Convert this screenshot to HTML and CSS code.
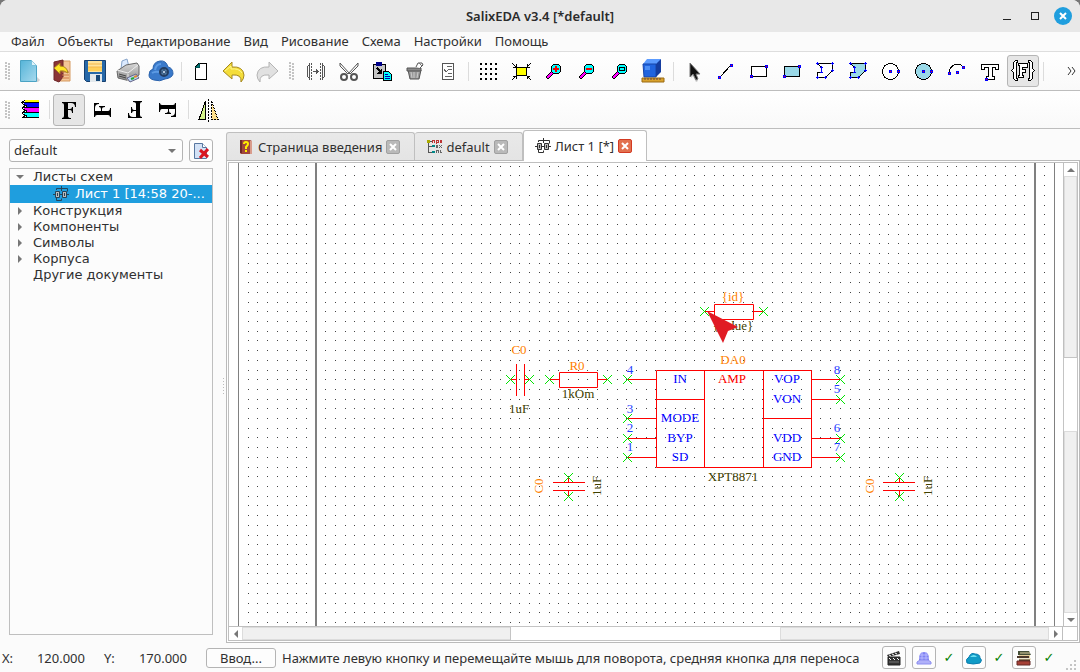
FILE: index.html
```html
<!DOCTYPE html>
<html lang="ru">
<head>
<meta charset="utf-8">
<title>SalixEDA v3.4 [*default]</title>
<link rel="stylesheet" href="styles.css">
</head>
<body>
<svg class="defs" aria-hidden="true">
  <defs>
    <linearGradient id="g-page" x1="0" y1="0" x2="1" y2="1"><stop offset="0" stop-color="#55b4d8"/><stop offset="1" stop-color="#a8daee"/></linearGradient>
    <linearGradient id="g-gray" x1="0" y1="0" x2="0" y2="1"><stop offset="0" stop-color="#d8d8d8"/><stop offset="1" stop-color="#8c8c8c"/></linearGradient>
    <symbol id="sheet" viewBox="0 0 16 16">
      <path d="M3.500 4V2.500h5M8.500 0v5M8 2.500h6.500v3M0 8.500h16M3.500 11v3.500h5v-2" fill="none" stroke="currentColor"/>
      <path d="M2.500 5.500h4v6h-4zM9.500 5.500h4v6h-4z" fill="#bbb" stroke="currentColor"/>
      <path d="M4 7h1v3H4zM11 7h1v3h-1zM6 8h4v1H6z" fill="currentColor"/>
    </symbol>
    <symbol id="lens" viewBox="0 0 24 24">
      <path d="M11 13L6 18" stroke="#000" stroke-width="4" stroke-linecap="square"/>
      <path d="M11 13L6 18" stroke="#f0f" stroke-width="2" stroke-linecap="square"/>
      <circle cx="14" cy="10" r="5" fill="#0ff" stroke="#000"/>
    </symbol>
    <symbol id="letter-f" viewBox="0 0 24 24">
      <path d="M5 4h14v5h-1q0-4-4-4h-3v6h2q2 0 2-2h1v6h-1q0-3-2-3h-2v6q0 2 3 2v1H5v-1q2 0 2-2V7q0-2-2-2z"/>
    </symbol>
  </defs>
</svg>
<div class="window">
  <header class="titlebar">
    <h1 class="title">SalixEDA v3.4 [*default]</h1>
    <div class="window-controls">
      <button class="wc" aria-label="Свернуть"><svg width="10" height="10" shape-rendering="crispEdges"><path d="M1 8.500h8" stroke="#222"/></svg></button>
      <button class="wc" aria-label="Развернуть"><svg width="10" height="10" shape-rendering="crispEdges"><path d="M1.500 1.500h7v7h-7z" fill="none" stroke="#222"/></svg></button>
      <button class="wc wc-close" aria-label="Закрыть"><svg width="10" height="10"><path d="M2 2l6 6M8 2l-6 6" stroke="#fff" stroke-width="2"/></svg></button>
    </div>
  </header>

  <nav class="menubar" aria-label="Меню">
    <button>Файл</button><button>Объекты</button><button>Редактирование</button><button>Вид</button><button>Рисование</button><button>Схема</button><button>Настройки</button><button>Помощь</button>
  </nav>

  <div class="toolbar" role="toolbar" aria-label="Основная">
    <span class="handle"></span>
    <button class="tool" aria-label="Создать"><svg viewBox="0 0 24 24"><path d="M20 18l3 3-2 2H8z" fill="#888" opacity=".35"/><path d="M3.500 1.500h11l5 5v16h-16z" fill="url(#g-page)" stroke="#4ba3c4"/><path d="M14.500 1.500v5h5" fill="#dff3fa" stroke="#79c1dc"/></svg></button>
    <button class="tool" aria-label="Открыть"><svg viewBox="0 0 24 24"><path d="M9 2h11v20H9z" fill="#f3c596" stroke="#d69a60"/><path d="M4 3l9-2v17l-4 5-5-2z" fill="#8b3536" stroke="#6d2728"/><path d="M12 13h7M12 16h7M12 19h7" stroke="#cf7a49"/><path d="M4 9l6-5v3q7 0 8 7-4-3-8-2v3z" fill="#ffe526" stroke="#ab8320"/></svg></button>
    <button class="tool" aria-label="Сохранить"><svg viewBox="0 0 24 24"><path d="M1.500 1.500h21v21h-19l-2-2z" fill="#2768a8" stroke="#17406f"/><path d="M5 2h14v11H5z" fill="#ffe49b"/><path d="M5 8h14v4H5z" fill="#ffd05a"/><path d="M5 5h14M5 8h14" stroke="#f3b64a"/><path d="M7 15h12v8H7z" fill="#e2e8ec"/><path d="M13 16h4v6h-4z" fill="#174878"/></svg></button>
    <button class="tool" aria-label="Печать"><svg viewBox="0 0 24 24"><path d="M5 10L6 2l5-2 2 8z" fill="#dbeaff" stroke="#87a4c9"/><path d="M1 12l9-6 11-2 2 3v9l-9 6-12-3z" fill="url(#g-gray)" stroke="#666"/><path d="M1 11l11 3 10-8M12 15v7" fill="none" stroke="#eee"/><path d="M3 15l7 2M3 17l7 2" stroke="#444"/><path d="M11 19l9-4 3 4-9 4z" fill="#bcd4f4" stroke="#668"/><path d="M15 20l3-1" stroke="#2a3" stroke-width="2"/><path d="M18 18l3-1" stroke="#d83" stroke-width="2"/></svg></button>
    <button class="tool" aria-label="Облако"><svg viewBox="0 0 24 24"><path d="M5 21q-5-1-5-5 0-5 4-6Q4 3 11 2q6-1 8 6 5 1 5 7-1 4-8 5-5 3-11 1z" fill="#3979ca" stroke="#2a62ac"/><path d="M6 11q1-6 6-6M3 14q3-2 7-1" fill="none" stroke="#5d9be4" stroke-width="2"/><circle cx="15" cy="13" r="4" fill="#547da5" stroke="#233e63" stroke-width="2"/><path d="M15 10v6M12 13h6" stroke="#233e63"/><circle cx="15" cy="13" r="1" fill="#def"/></svg></button>
    <span class="separator"></span>
    <button class="tool crisp" aria-label="Новый лист"><svg viewBox="0 0 24 24"><path d="M9.500 4.500h8v16h-11v-13z" fill="#fff" stroke="#000"/><path d="M7 8l3-3v3z" fill="#007c7c" stroke="#055"/></svg></button>
    <button class="tool" aria-label="Отменить"><svg viewBox="0 0 24 24"><path d="M1 12l9-9v5q11-1 12 8 0 4-3 7 1-8-9-7v4z" fill="#f4dd39" stroke="#a58820"/><path d="M3 12l6-5v3q8-1 11 4" fill="none" stroke="#fff78e"/></svg></button>
    <button class="tool" aria-label="Повторить"><svg viewBox="0 0 24 24"><path d="M23 12l-9-9v5Q3 7 2 16q0 4 3 7-1-8 9-7v4z" fill="#e1e1e1" stroke="#b4b4b4"/></svg></button>
    <span class="handle handle-mid"></span>
    <button class="tool crisp" aria-label="Выровнять"><svg viewBox="0 0 24 24"><g fill="none" stroke="#555"><path d="M6 4.500L3.500 8v9L6 20.500M18 4.500L20.500 8v9L18 20.500M5.500 6v13M18.500 6v13"/><path d="M7.500 4v17M16.500 4v17" stroke-dasharray="2 1"/></g><path d="M9 12.500h4" stroke="#555"/><path d="M12 9l3 3.500-3 3.500z" fill="#555"/></svg></button>
    <button class="tool" aria-label="Вырезать"><svg viewBox="0 0 24 24"><path d="M3 4l10 11M21 4L11 15M3 4v3l8 8M21 4v3l-8 8" fill="none" stroke="#555"/><circle cx="7" cy="18" r="3" fill="#fff" stroke="#555" stroke-width="2"/><circle cx="17" cy="18" r="3" fill="#fff" stroke="#555" stroke-width="2"/></svg></button>
    <button class="tool crisp" aria-label="Вставить"><svg viewBox="0 0 24 24"><path d="M3.500 5.500h12v14h-12z" fill="#c5c5c5" stroke="#000"/><path d="M6 3h6v4H6z" fill="#00008b"/><path d="M7 9l5 5" stroke="#000" stroke-width="2"/><path d="M12 9v6H6z"/><path d="M13.500 12.500h5l3 3v6h-8z" fill="#0ff" stroke="#000"/><path d="M15 15.500h3M15 17.500h5M15 19.500h5" stroke="#00a"/></svg></button>
    <button class="tool" aria-label="Удалить"><svg viewBox="0 0 24 24"><path d="M5 11h13l-2 9H7z" fill="#999" stroke="#555"/><path d="M4 9h14v3H4z" fill="#888" stroke="#555"/><path d="M8 13l1 6M11 13v6M15 13l-1 6" stroke="#ccc"/><path d="M13 8l2-4h4l1 2-3 3" fill="#fff" stroke="#555"/><path d="M16 4l3 3" stroke="#777"/></svg></button>
    <button class="tool crisp" aria-label="Свойства"><svg viewBox="0 0 24 24"><path d="M6.500 4.500h11v16h-11z" fill="#fff" stroke="#555"/><path d="M11 7.500h5M12 10.500h4M12 14.500h4M9 17.500h7" fill="none" stroke="#666"/><path d="M8 10l2 3 3-3" fill="none" stroke="#666"/></svg></button>
    <span class="separator"></span>
    <button class="tool crisp" aria-label="Сетка"><svg viewBox="0 0 24 24"><path d="M4 5h18M4 10h18M4 15h18M4 20h18" stroke="#000" stroke-width="2" stroke-dasharray="2 3"/></svg></button>
    <button class="tool crisp" aria-label="Вписать"><svg viewBox="0 0 24 24"><path d="M7.500 8.500h10v8h-10z" fill="#ff0" stroke="#000"/><path d="M3 4l4 4M7 5v3H4M22 4l-4 4M18 5v3h3M3 21l4-4M7 20v-3H4M22 21l-4-4M18 20v-3h3" fill="none" stroke="#000"/></svg></button>
    <button class="tool crisp" aria-label="Увеличить"><svg viewBox="0 0 24 24"><use href="#lens" width="24" height="24"/><path d="M11 10h6M14 7v6" stroke="#e00" stroke-width="2"/></svg></button>
    <button class="tool crisp" aria-label="Уменьшить"><svg viewBox="0 0 24 24"><use href="#lens" width="24" height="24"/><path d="M11 10h6" stroke="#e00" stroke-width="2"/></svg></button>
    <button class="tool crisp" aria-label="Масштаб рамкой"><svg viewBox="0 0 24 24"><use href="#lens" width="24" height="24"/><path d="M11.500 8.500h5v3h-5z" fill="none" stroke="#000"/></svg></button>
    <button class="tool" aria-label="Трёхмерный вид"><svg viewBox="0 0 24 24"><path d="M2 5l4-5h14l-3 5z" fill="#5b9bff"/><path d="M2 5h13v13H3z" fill="#2064df" stroke="#1744a8"/><path d="M15 5l5-5v13l-5 5z" fill="#153d9f"/><path d="M4 7h5v4H4z" fill="#4b8df5"/><path d="M1 19h22v4H1z" fill="#d9a22c" stroke="#9a6b13"/><path d="M4 19v2M7 19v2M10 19v2M13 19v2M16 19v2M19 19v2" stroke="#644"/></svg></button>
    <span class="separator"></span>
    <button class="tool" aria-label="Выбор"><svg viewBox="0 0 24 24"><path d="M10 6l9 9-5 1 3 6-2 1-3-6-2 2z" fill="#999" opacity=".5"/><path d="M9 4v14l3-3 3 6 2-1-2-5h4z" fill="#111" stroke="#777"/></svg></button>
    <button class="tool crisp" aria-label="Линия"><svg viewBox="0 0 24 24"><path d="M6 18L17 6" stroke="#000"/><path d="M4.500 17.500h2v2h-2zM16.500 5.500h2v2h-2z" fill="#f00" stroke="#00f"/></svg></button>
    <button class="tool crisp" aria-label="Прямоугольник"><svg viewBox="0 0 24 24"><path d="M4.500 7.500h15v10h-15z" fill="#fff" stroke="#000"/><path d="M3.500 16.500h2v2h-2zM18.500 6.500h2v2h-2z" fill="#f00" stroke="#00f"/></svg></button>
    <button class="tool crisp" aria-label="Залитый прямоугольник"><svg viewBox="0 0 24 24"><path d="M4.500 7.500h15v10h-15z" fill="#9ad9e8" stroke="#000"/><path d="M3.500 16.500h2v2h-2zM18.500 6.500h2v2h-2z" fill="#f00" stroke="#00f"/></svg></button>
    <button class="tool crisp" aria-label="Многоугольник"><svg viewBox="0 0 24 24"><path d="M4.500 4.500h15v7l-7 7h-8v-5h4v-5z" fill="#fff" stroke="#000"/><path d="M3 4.500h3M4.500 3v3M18 4.500h3M19.500 3v3M7 8.500h3M8.500 7v7M7 13.500h3M3 18.500h3M4.500 17v3M11 18.500h3M12.500 17v3M18 11.500h3M19.500 10v3" stroke="#00f"/></svg></button>
    <button class="tool crisp" aria-label="Залитый многоугольник"><svg viewBox="0 0 24 24"><path d="M4.500 4.500h15v7l-7 7h-8v-5h4v-5z" fill="#9ad9e8" stroke="#000"/><path d="M3 4.500h3M4.500 3v3M18 4.500h3M19.500 3v3M7 8.500h3M8.500 7v7M7 13.500h3M3 18.500h3M4.500 17v3M11 18.500h3M12.500 17v3M18 11.500h3M19.500 10v3" stroke="#00f"/></svg></button>
    <button class="tool crisp" aria-label="Окружность"><svg viewBox="0 0 24 24"><circle cx="11.500" cy="12.500" r="8" fill="#fff" stroke="#000"/><path d="M10.500 11.500h2v2h-2zM18.500 11.500h2v2h-2z" fill="#f00" stroke="#00f"/></svg></button>
    <button class="tool crisp" aria-label="Круг"><svg viewBox="0 0 24 24"><circle cx="11.500" cy="12.500" r="8" fill="#9ad9e8" stroke="#000"/><path d="M10.500 11.500h2v2h-2zM18.500 11.500h2v2h-2z" fill="#f00" stroke="#00f"/></svg></button>
    <button class="tool crisp" aria-label="Дуга"><svg viewBox="0 0 24 24"><path d="M4 14q1-8 8-9 4 0 6 3" fill="none" stroke="#000"/><path d="M3.500 13.500h2v2h-2zM11.500 12.500h2v2h-2zM17.500 7.500h2v2h-2z" fill="#f00" stroke="#00f"/></svg></button>
    <button class="tool crisp" aria-label="Текст"><svg viewBox="0 0 24 24"><path d="M3.500 5.500h17v5h-3v-2h-3v9h2v3h-8v-3h2v-9h-4v2h-3z" fill="#fff" stroke="#000"/><path d="M7.500 19.500h2v2h-2z" fill="#f00" stroke="#00f"/></svg></button>
    <button class="tool crisp pressed" aria-pressed="true" aria-label="Текстовое поле"><svg viewBox="0 0 24 24"><g fill="#fff" stroke="#000"><path d="M6.500 1.500h-2l-2 2v6l-2 2 2 2v6l2 2h2v-2h-1v-16h1zM17.500 1.500h2l2 2v6l2 2-2 2v6l-2 2h-2v-2h1v-16h-1z"/><path d="M7.500 4.500h9v4h-5v2h3v3h-3v3h1v2h-5v-2h1v-10h-1z"/></g></svg></button>
    <span class="separator"></span>
    <button class="more" aria-label="Ещё"><svg width="9" height="8" viewBox="0 0 9 8"><path d="M1 0l3 4-3 4M5 0l3 4-3 4" fill="none" stroke="#333"/></svg></button>
  </div>

  <div class="toolbar" role="toolbar" aria-label="Ориентация">
    <span class="handle"></span>
    <button class="tool crisp" aria-label="Слои"><svg viewBox="0 0 24 24"><path d="M8 2h14v3H8z" fill="#ff0"/><path d="M7 5h15v4H10z" fill="#00f"/><path d="M7 10h15v4H10z" fill="#f0f"/><path d="M7 15h15v4H10z" fill="#0ff"/><path d="M8 2L5 4.500h17M5 5l5 4M10 7L5 9.500h17M5 10l5 4M10 12l-5 2.500h17M5 15l5 4M10 17l-5 2.500h17" fill="none" stroke="#000"/></svg></button>
    <span class="separator"></span>
    <button class="tool pressed" aria-pressed="true" aria-label="0 градусов"><svg viewBox="0 0 24 24"><use href="#letter-f" width="24" height="24"/></svg></button>
    <button class="tool" aria-label="90 градусов"><svg viewBox="0 0 24 24"><use href="#letter-f" width="24" height="24" transform="rotate(-90 12 12)"/></svg></button>
    <button class="tool" aria-label="180 градусов"><svg viewBox="0 0 24 24"><use href="#letter-f" width="24" height="24" transform="rotate(180 12 12)"/></svg></button>
    <button class="tool" aria-label="270 градусов"><svg viewBox="0 0 24 24"><use href="#letter-f" width="24" height="24" transform="rotate(90 12 12)"/></svg></button>
    <span class="separator"></span>
    <button class="tool crisp" aria-label="Отразить"><svg viewBox="0 0 24 24"><path d="M9.500 3v18.500H3z" fill="#d5f58c" stroke="#000"/><path d="M15.500 3v18.500H22z" fill="#ffe08a" stroke="#000" stroke-dasharray="2 1"/><path d="M12.500 1v23" stroke="#000" stroke-dasharray="2 1"/></svg></button>
  </div>

  <main class="workspace">
    <aside class="sidebar">
      <div class="project-row">
        <select class="project-select" aria-label="Проект"><option>default</option></select>
        <button class="square-button" aria-label="Закрыть проект"><svg width="16" height="16" viewBox="0 0 16 16"><path d="M1.500.5h8l4 4v11h-12z" fill="#d3e2f6" stroke="#5877a0"/><path d="M9.500.5v4h4" fill="#fff" stroke="#5877a0"/><path d="M7 7l8 7M15 6l-8 9" stroke="#d81420" stroke-width="3"/></svg></button>
      </div>
      <ul class="tree" role="tree">
        <li role="treeitem" aria-expanded="true" class="node"><span class="arrow open"></span>Листы схем</li>
        <li role="treeitem" aria-selected="true" class="node selected"><svg width="16" height="16"><use href="#sheet" width="16" height="16"/></svg><span class="leaf-name">Лист 1 [14:58 20-...</span></li>
        <li role="treeitem" aria-expanded="false" class="node"><span class="arrow"></span>Конструкция</li>
        <li role="treeitem" aria-expanded="false" class="node"><span class="arrow"></span>Компоненты</li>
        <li role="treeitem" aria-expanded="false" class="node"><span class="arrow"></span>Символы</li>
        <li role="treeitem" aria-expanded="false" class="node"><span class="arrow"></span>Корпуса</li>
        <li role="treeitem" class="node"><span class="arrow none"></span>Другие документы</li>
      </ul>
    </aside>
    <div class="splitter"></div>
    <section class="editor">
      <div class="tabs">
        <div class="tab"><svg width="16" height="16" viewBox="0 0 16 16"><path d="M2 1h10l2 1v13H3l-1-1z" fill="#a0463c"/><path d="M2 1h2v13H2z" fill="#6f2a28"/><path d="M12 2h2v13h-2z" fill="#d99c8c"/><path d="M6 5q0-2 2-2t2 2q0 1-2 3v2M8 11v2" fill="none" stroke="#fe0" stroke-width="2"/></svg><button class="tab-name">Страница введения</button><button class="tab-close" aria-label="Закрыть вкладку"><svg width="8" height="8"><path d="M1 1l6 6M7 1L1 7" stroke="#fff" stroke-width="2"/></svg></button></div>
        <div class="tab"><svg width="16" height="16" viewBox="0 0 16 16" shape-rendering="crispEdges"><path d="M1 1h3v3H1z" fill="#aa0"/><path d="M2.500 4v9h4M2.500 7.500h4M4 2.500h2" fill="none" stroke="#555"/><path d="M6 6h3v2H6zM6 12h3v2H6z" fill="#088"/><path d="M6.500 4V1.500h2V4M10.500 5V1.500h2v2h-2M14.500 1.500h1v2h-1z" fill="none" stroke="#b33"/><path d="M10.500 6.500h1v2h-1zM13 6l3 3M16 6l-3 3M10.500 14v-2.500h2V14M14.500 11v2.500h1" fill="none" stroke="#666"/></svg><button class="tab-name">default</button><button class="tab-close" aria-label="Закрыть вкладку"><svg width="8" height="8"><path d="M1 1l6 6M7 1L1 7" stroke="#fff" stroke-width="2"/></svg></button></div>
        <div class="tab active"><svg width="16" height="16"><use href="#sheet" width="16" height="16"/></svg><button class="tab-name">Лист 1 [*]</button><button class="tab-close" aria-label="Закрыть вкладку"><svg width="8" height="8"><path d="M1 1l6 6M7 1L1 7" stroke="#fff" stroke-width="2"/></svg></button></div>
      </div>
      <div class="pane">
        <div class="view">
          <svg class="schematic" role="img" aria-label="Схема">
            <g transform="translate(-229 -163)">
              <g class="frame"><path d="M238.500 163V2000M1054.500 163V2000"/><path d="M316 163V2000M1035 163V2000" stroke-width="2"/></g>
              <path id="dots" class="dots"/>
              <g class="wires">
                <path d="M510 379.500h6M524 379.500h6M516.500 364v32M524.500 364v32"/>
                <path d="M549 379.500h10M598 379.500h10M559.500 372.500h38v15h-38z"/>
                <path d="M656.500 370.500h155v97h-155zM704.500 370v97M763.500 370v97M656 399.500h48M763 418.500h48"/>
                <path d="M627 379.500h29M627 418.500h29M627 438.500h29M627 457.500h29M812 379.500h29M812 399.500h29M812 438.500h29M812 457.500h29"/>
                <path d="M704 311.500h10M754 311.500h10M714.500 304.500h39v15h-39z"/>
                <path d="M553 482.500h32M553 490.500h32M568.500 477v5M568.500 491v5"/>
                <path d="M883 482.500h32M883 490.500h32M899.500 477v5M899.500 491v5"/>
              </g>
              <path id="pins" class="pins"/>
              <g class="ref"><text x="519" y="354">C0</text><text x="577" y="370">R0</text><text x="733" y="364">DA0</text><text x="733" y="301">{id}</text><text transform="translate(543 486) rotate(-90)">C0</text><text transform="translate(874 486) rotate(-90)">C0</text></g>
              <g class="value"><text x="519" y="413">1uF</text><text x="578" y="398">1kOm</text><text x="733" y="481">XPT8871</text><text x="733" y="330">{value}</text><text transform="translate(601 486) rotate(-90)">1uF</text><text transform="translate(932 486) rotate(-90)">1uF</text></g>
              <g class="pin-name"><text x="680" y="383">IN</text><text x="680" y="422">MODE</text><text x="680" y="442">BYP</text><text x="680" y="461">SD</text><text x="787" y="383">VOP</text><text x="787" y="403">VON</text><text x="787" y="442">VDD</text><text x="787" y="461">GND</text></g>
              <g class="pin-number"><text x="630" y="374">4</text><text x="630" y="413">3</text><text x="630" y="432">2</text><text x="630" y="451">1</text><text x="837" y="374">8</text><text x="837" y="393">5</text><text x="837" y="432">6</text><text x="837" y="451">7</text></g>
              <text class="chip-name" x="732" y="383">AMP</text>
              <path d="M707 311l31 16-10 4-5 12z" fill="#e01b24"/>
            </g>
          </svg>
        </div>
        <div class="scroll vertical"><button class="step" aria-label="Вверх"><i class="up"></i></button><span class="track v-before"></span><span class="thumb v-thumb"></span><span class="track v-after"></span><button class="step" aria-label="Вниз"><i class="down"></i></button></div>
        <div class="scroll"><button class="step" aria-label="Влево"><i class="left"></i></button><span class="track"></span><span class="thumb"></span><span class="track"></span><button class="step" aria-label="Вправо"><i class="right"></i></button></div>
        <span class="corner"></span>
      </div>
    </section>
  </main>

  <footer class="statusbar">
    <span class="axis">X:</span><output class="coord">120.000</output>
    <span class="axis">Y:</span><output class="coord">170.000</output>
    <button class="enter">Ввод...</button>
    <span class="hint">Нажмите левую кнопку и перемещайте мышь для поворота, средняя кнопка для переноса</span>
    <button class="square-button" aria-label="Видео"><svg width="16" height="16" viewBox="0 0 16 16"><path d="M2 7h12v8H2z" fill="#333" stroke="#222"/><path d="M1 5l12-4 1 3L2 7z" fill="#333"/><path d="M3 5l2 1M6 4l2 1M9 3l2 1M3 8l2 2M7 8l2 2M11 8l2 2" stroke="#fff"/><path d="M3 12h10" stroke="#777"/></svg></button>
    <button class="square-button" aria-label="Сервер"><svg width="16" height="16" viewBox="0 0 16 16"><path d="M3 9q0-7 5-7t5 7v1H3z" fill="#7f82f2"/><path d="M4 5h8M3 8h10M6 2v8M10 2v8" stroke="#b9baff"/><path d="M1 12l3-2h8l3 2v2H1z" fill="#b0b1f9" stroke="#8c8ef0"/></svg></button>
    <span class="ok">✓</span>
    <button class="square-button" aria-label="Синхронизация"><svg width="16" height="16" viewBox="0 0 16 16"><path d="M1 13q-2-4 2-6 2-5 6-3 5 0 5 4 3 2 0 5-7 2-13 0z" fill="#109bc6" stroke="#0a7cae"/><path d="M4 7q4-4 7 0" fill="#6de0f2"/></svg></button>
    <span class="ok">✓</span>
    <button class="square-button" aria-label="Библиотека"><svg width="16" height="16" viewBox="0 0 16 16"><path d="M2 1h11l2 4H2z" fill="#465038"/><path d="M3 5h11v3H3z" fill="#e8cf9b"/><path d="M1 6h12v2H1zM3 9h11v2H3z" fill="#4b382b"/><path d="M1 11h13v4H1z" fill="#a64036" stroke="#642924"/><path d="M4 3h10M3 9h12" stroke="#ddd0a0"/></svg></button>
    <span class="ok">✓</span>
    <span class="grip"></span>
  </footer>
</div>
<script src="grid.js"></script>
</body>
</html>
```
FILE: styles.css
```css
* { box-sizing: border-box; }
html { background: #777; }
body { margin: 0; font-family: "Noto Sans", sans-serif; font-size: 13px; line-height: 16px; color: #303030; }
button, select { margin: 0; padding: 0; border: 0; background: none; font: inherit; color: inherit; }
svg { flex: none; }
.defs { position: absolute; width: 0; height: 0; }
.window { min-height: 100vh; display: flex; flex-direction: column; background: #fbfbfb; border-radius: 8px 8px 0 0; overflow: hidden; }

.titlebar { height: 32px; flex: none; display: grid; grid-template-columns: 1fr auto 1fr; align-items: center; padding: 0 8px; background: #e8e8e8; }
.title { grid-column: 2; margin: 0; font-size: 13px; font-weight: 600; color: #2b2b2b; }
.window-controls { display: flex; justify-content: flex-end; gap: 10px; }
.wc { width: 18px; height: 18px; display: grid; place-items: center; border-radius: 50%; }
.wc-close { background: #1f9ede; }

.menubar { height: 20px; flex: none; display: flex; align-items: center; padding: 0 0 2px 11px; gap: 13px; border-bottom: 1px solid #dedede; }

.toolbar { height: 39px; flex: none; display: flex; align-items: center; gap: 1px; border-bottom: 1px solid #bdbdbd; background: linear-gradient(#fff, #f9f9f9); overflow: hidden; }
.toolbar + .toolbar { height: 38px; }
.handle { flex: none; width: 12px; height: 18px; background: radial-gradient(circle at 1px 1px, #c4c4c4 1px, transparent 1px) 5px 0 / 3px 3px repeat-y, radial-gradient(circle at 1px 1px, #c4c4c4 1px, transparent 1px) 8px 1px / 3px 3px repeat-y; }
.handle-mid { width: 15px; }
.separator { flex: none; width: 6px; height: 19px; background: linear-gradient(#dcdcdc, #dcdcdc) center / 1px 100% no-repeat; }
.tool { flex: none; width: 32px; height: 32px; display: grid; place-items: center; border: 1px solid transparent; border-radius: 3px; }
.tool svg { width: 24px; height: 24px; overflow: visible; }
.crisp svg { shape-rendering: crispEdges; }
.pressed { background: #e6e6e6; border-color: #b5b5b5; }
.more { margin-left: auto; padding-right: 4px; display: flex; }

.workspace { flex: 1; display: flex; min-height: 0; }
.sidebar { width: 213px; flex: none; display: flex; flex-direction: column; gap: 6px; padding: 10px 0 8px 9px; }
.project-row { position: relative; display: flex; gap: 6px; }
.project-select { flex: 1; min-width: 0; height: 23px; padding: 0 4px 2px; appearance: none; border: 1px solid #b4b4b4; border-radius: 3px; background: #fdfdfd; }
.project-row::before { content: ""; position: absolute; right: 37px; top: 10px; border: 4px solid transparent; border-top-color: #777; border-bottom: 0; pointer-events: none; }
.square-button { flex: none; width: 24px; height: 23px; display: grid; place-items: center; border: 1px solid #b4b4b4; border-radius: 3px; background: #fdfdfd; }
.tree { flex: 1; margin: 0; padding: 0; list-style: none; border: 1px solid #bfbfbf; background: #fcfcfc; font-family: "DejaVu Sans", sans-serif; }
.node { display: flex; align-items: center; height: 16px; white-space: nowrap; }
.selected { height: 18px; padding-left: 43px; gap: 6px; background: #1f9ede; color: #fff; }
.selected svg { color: #24445a; }
.leaf-name { overflow: hidden; }
.arrow { width: 23px; flex: none; }
.arrow::before { content: ""; display: block; width: 0; margin-left: 8px; border: 4px solid transparent; border-left-color: #777; border-right: 0; }
.arrow.open::before { margin-left: 6px; border: 4px solid transparent; border-top-color: #777; border-bottom: 0; }
.arrow.none::before { content: none; }
.splitter { width: 13px; flex: none; background: repeating-linear-gradient(#bbb 0 1px, transparent 1px 3px) 10px center / 1px 16px no-repeat; }

.editor { flex: 1; min-width: 0; display: flex; flex-direction: column; padding-top: 1px; }
.tabs { display: flex; align-items: flex-end; height: 30px; }
.tab { height: 28px; display: flex; align-items: center; gap: 4px; padding: 0 14px 0 11px; border: 1px solid #bfbfbf; border-bottom: 0; border-radius: 3px 3px 0 0; background: linear-gradient(#e9e9e9, #e4e4e4); }
.tab + .tab { border-left: 0; }
.tab.active { height: 31px; margin-bottom: -1px; padding-bottom: 1px; position: relative; border-left: 1px solid #bfbfbf; background: #fff; }
.tab-name { white-space: nowrap; }
.tab-close { width: 14px; height: 14px; display: grid; place-items: center; border: 1px solid #a0a0a0; border-radius: 2px; background: #b9b9b9; }
.active .tab-close { border-color: #d33a22; background: #e2714f; }

.pane { flex: 1; display: grid; grid-template: 1fr 15px / 1fr 15px; padding: 1px; border: 1px solid #bababa; background: #fff; }
.view { position: relative; overflow: hidden; border: 1px solid #bfbfbf; border-right: 0; border-bottom: 0; background: #fff; }
.schematic { position: absolute; inset: 0; width: 100%; height: 100%; font-family: "Liberation Serif", serif; font-size: 13px; text-anchor: middle; }
.frame { stroke: #808080; }
.dots { stroke: #444; shape-rendering: crispEdges; }
.wires { fill: none; stroke: #f00; }
.pins { stroke: #00e400; }
.ref { fill: #ff7f00; }
.value { fill: #404000; }
.pin-name { fill: #00f; }
.pin-number { fill: #1e3cff; }
.chip-name { fill: #f00; }
.scroll { display: flex; border: 1px solid #bfbfbf; }
.vertical { flex-direction: column; border-bottom: 0; }
.step { flex: 0 0 13px; display: grid; place-items: center; background: #fff; }
.track { flex: 1; background: #f0f0f0; box-shadow: inset 0 0 0 1px #dcdcdc; }
.thumb { flex: 1; background: #fff; outline: 1px solid #c4c4c4; }
.v-before { flex: 182; }
.v-thumb { flex: 73; }
.v-after { flex: 182; }
.step i { border: 0 solid transparent; }
.step .up { border-width: 0 4px 4px; border-bottom-color: #777; }
.step .down { border-width: 4px 4px 0; border-top-color: #777; }
.step .left { border-width: 4px 4px 4px 0; border-right-color: #777; }
.step .right { border-width: 4px 0 4px 4px; border-left-color: #777; }
.corner { border: 1px solid #bfbfbf; border-left: 0; }

.statusbar { height: 29px; flex: none; display: flex; align-items: center; gap: 6px; padding: 0 2px; white-space: nowrap; }
.axis { width: 14px; }
.coord { width: 63px; text-align: right; }
.coord + .axis, .enter { margin-left: 13px; }
.enter { width: 70px; height: 20px; border: 1px solid #b4b4b4; border-radius: 3px; background: #fdfdfd; line-height: 16px; }
.hint { flex: 1; min-width: 0; overflow: hidden; }
.ok { width: 14px; text-align: center; font-family: "DejaVu Sans", sans-serif; color: #008000; }
.grip { width: 16px; height: 16px; align-self: flex-end; background: radial-gradient(circle at 1px 1px, #c4c4c4 1px, transparent 1px) 0 0 / 4px 4px; clip-path: polygon(100% 0, 100% 100%, 0 100%); }
```
FILE: grid.js
```js
// Grid pitch of the drawing area and the first grid node, in page pixels.
const pitch = 9.707;
const originX = 248.2;
const originY = 166.2;

let dots = "";
for (let j = 0; j < 120; j++) {
  for (let i = 0; i < 83; i++) {
    if (i === 7 || i === 81) continue;
    const x = Math.floor(originX + i * pitch);
    const y = Math.floor(originY + j * pitch);
    dots += `M${x} ${y}.5h1`;
  }
}
document.getElementById("dots").setAttribute("d", dots);

// Connection points of the placed components.
const pins = [
  [510, 379], [529, 379], [549, 379], [607, 379],
  [627, 379], [627, 418], [627, 438], [627, 457],
  [840, 379], [840, 399], [840, 438], [840, 457],
  [704, 311], [763, 311],
  [568, 477], [568, 496], [899, 477], [899, 496]
];
document.getElementById("pins").setAttribute(
  "d",
  pins.map(([x, y]) => `M${x - 4} ${y - 4}l9 9M${x - 4} ${y + 5}l9 -9`).join("")
);
```
